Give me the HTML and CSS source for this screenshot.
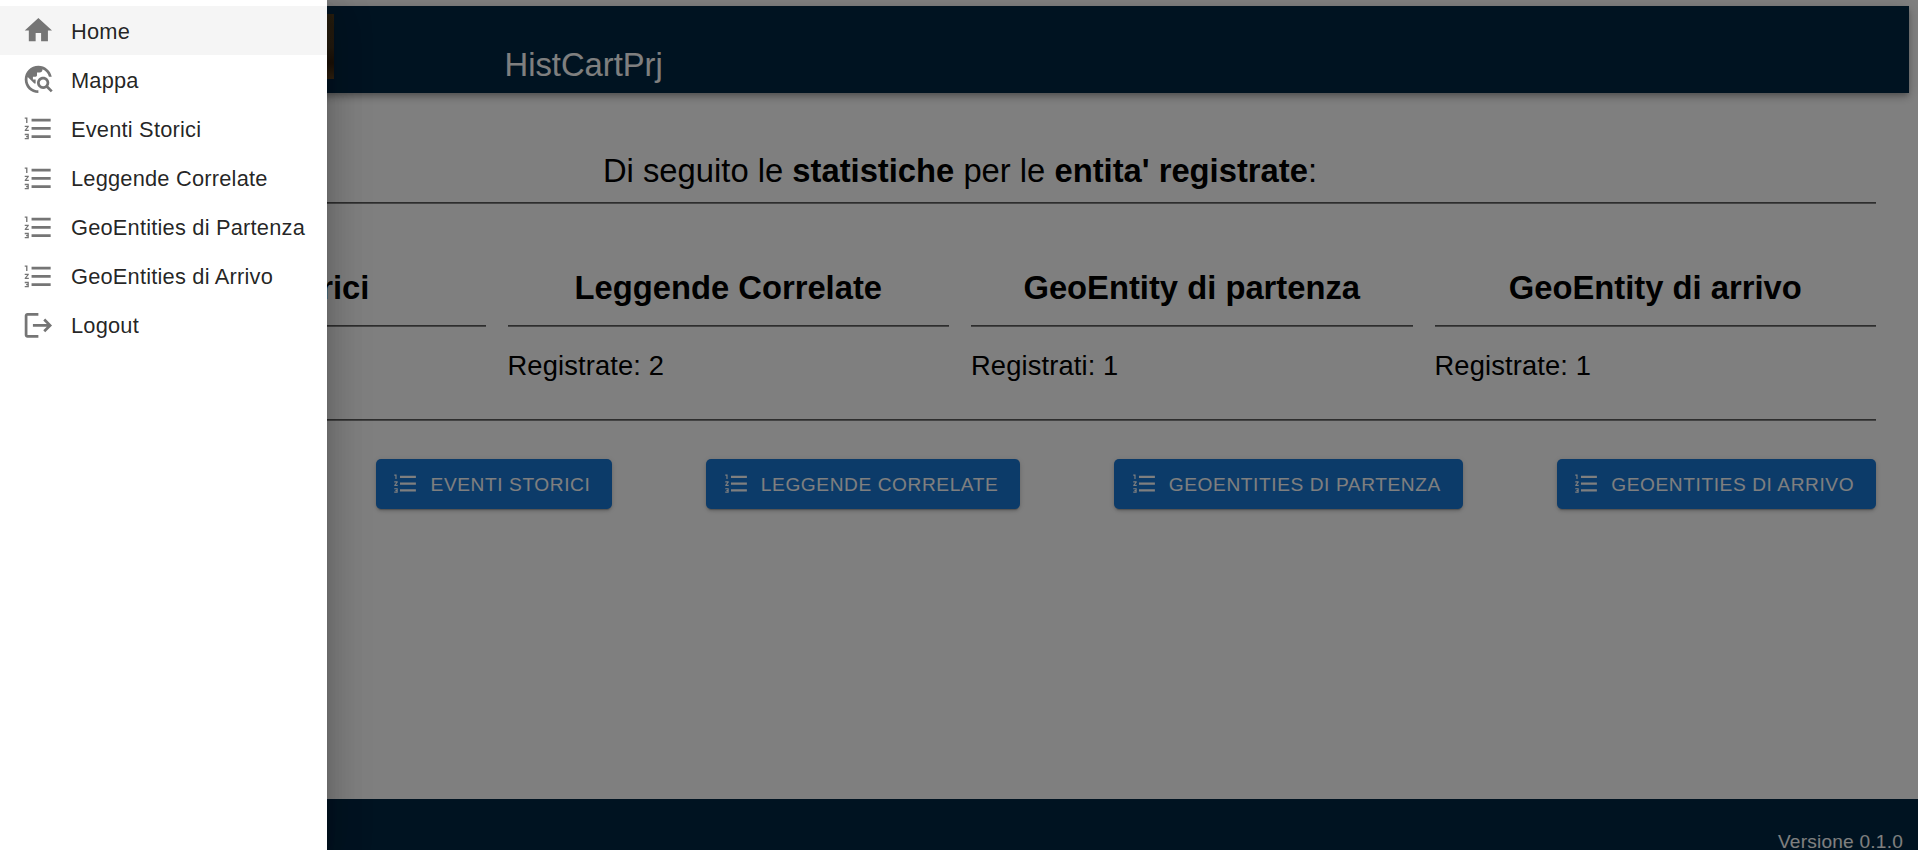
FILE: index.html
```
<!DOCTYPE html>
<html lang="it">
<head>
<meta charset="utf-8">
<title>HistCartPrj</title>
<link rel="stylesheet" href="styles.css">
</head>
<body>
<svg class="defs" aria-hidden="true">
  <symbol id="list" viewBox="0 0 24 24"><path d="M2 17h2v.5H3v1h1v.5H2v1h3v-4H2v1zm1-9h1V4H2v1h1v3zm-1 3h1.800L2 13.100v.9h3v-1H3.200L5 10.900V10H2v1zm5-6v2h14V5H7zm0 14h14v-2H7v2zm0-6h14v-2H7v2z"/></symbol>
</svg>
<div class="page">
  <header class="topbar">
    <div class="logo"></div>
    <h1 class="brand">HistCartPrj</h1>
  </header>
  <main class="content">
    <h2 class="intro">Di seguito le <b>statistiche</b> per le <b>entita' registrate</b>:</h2>
    <hr class="rule">
    <section class="stats">
      <article class="stat"><h3 class="stat-title">Eventi Storici</h3><hr class="rule"><p class="stat-value">Registrati: 2</p></article>
      <article class="stat"><h3 class="stat-title">Leggende Correlate</h3><hr class="rule"><p class="stat-value">Registrate: 2</p></article>
      <article class="stat"><h3 class="stat-title">GeoEntity di partenza</h3><hr class="rule"><p class="stat-value">Registrati: 1</p></article>
      <article class="stat"><h3 class="stat-title">GeoEntity di arrivo</h3><hr class="rule"><p class="stat-value">Registrate: 1</p></article>
    </section>
    <hr class="rule">
    <div class="actions">
      <button class="btn btn-map">Mappa</button>
      <button class="btn"><svg class="btn-icon"><use href="#list"/></svg><span class="label">Eventi Storici</span></button>
      <button class="btn"><svg class="btn-icon"><use href="#list"/></svg><span class="label">Leggende Correlate</span></button>
      <button class="btn"><svg class="btn-icon"><use href="#list"/></svg><span class="label">GeoEntities di Partenza</span></button>
      <button class="btn"><svg class="btn-icon"><use href="#list"/></svg><span class="label">GeoEntities di Arrivo</span></button>
    </div>
  </main>
  <footer class="footer">Versione 0.1.0</footer>
</div>
<div class="backdrop"></div>
<nav class="drawer">
  <a class="item item-active"><svg class="icon" viewBox="0 0 24 24"><path d="M10 20v-6h4v6h5v-8h3L12 3 2 12h3v8z"/></svg><span class="label">Home</span></a>
  <a class="item"><svg class="icon" viewBox="0 0 24 24"><path d="M19.300 16.900c.4-.7.7-1.500.7-2.400 0-2.500-2-4.500-4.500-4.500S11 12 11 14.500s2 4.500 4.500 4.500c.9 0 1.700-.3 2.400-.7l3.200 3.200 1.400-1.400-3.200-3.200zm-3.800.1c-1.400 0-2.500-1.100-2.500-2.500s1.100-2.500 2.500-2.500 2.500 1.100 2.500 2.500-1.100 2.500-2.500 2.500zM12 20v2C6.480 22 2 17.520 2 12S6.480 2 12 2c4.840 0 8.870 3.440 9.800 8h-2.070c-.64-2.460-2.400-4.470-4.730-5.410V5c0 1.100-.9 2-2 2h-2v2c0 .55-.45 1-1 1H8v2h2v3H9l-4.790-4.790C4.080 10.790 4 11.380 4 12c0 4.410 3.590 8 8 8z"/></svg><span class="label">Mappa</span></a>
  <a class="item"><svg class="icon"><use href="#list"/></svg><span class="label">Eventi Storici</span></a>
  <a class="item"><svg class="icon"><use href="#list"/></svg><span class="label">Leggende Correlate</span></a>
  <a class="item"><svg class="icon"><use href="#list"/></svg><span class="label">GeoEntities di Partenza</span></a>
  <a class="item"><svg class="icon"><use href="#list"/></svg><span class="label">GeoEntities di Arrivo</span></a>
  <a class="item"><svg class="icon" viewBox="0 0 24 24"><path d="m17 7-1.410 1.410L18.170 11H8v2h10.170l-2.580 2.580L17 17l5-5zM4 5h8V3H4c-1.100 0-2 .9-2 2v14c0 1.100.9 2 2 2h8v-2H4V5z"/></svg><span class="label">Logout</span></a>
</nav>
</body>
</html>
```
FILE: styles.css
```
* { box-sizing: border-box; }

html { font-size: 21.84px; }

body {
  margin: 0;
  height: 850px;
  overflow: hidden;
  background: #fff;
  color: #000;
  font-family: "Liberation Sans", Arial, sans-serif;
}

h1, h2, h3, p { margin: 0; font-weight: 400; }

.defs { display: block; width: 0; height: 0; }

.page {
  display: flex;
  flex-direction: column;
  height: 850px;
  padding-top: 6px;
}

.topbar {
  display: flex;
  flex: none;
  height: 87px;
  margin: 0 9px;
  padding-top: 8px;
  background: #002743;
  box-shadow: 0 3px 5px -1px rgba(0, 0, 0, .2), 0 5px 7px rgba(0, 0, 0, .14), 0 1px 14px rgba(0, 0, 0, .12);
}

.logo {
  width: 65px;
  height: 65px;
  margin-left: 260px;
  background: linear-gradient(#4c3a1d, #49371e 50%, #35230f 75%, #604321);
}

.brand {
  padding: 29px 0 0 170.5px;
  color: #fff;
  font-size: 1.5rem;
  line-height: 1.334;
}

.content { flex: 1; padding: 56px 42px 0 44px; }

.intro {
  font-size: 1.5rem;
  line-height: 44px;
  text-align: center;
}

.rule {
  height: 2px;
  margin: 0;
  border: 0;
  border-top: 1px solid #5b5b5b;
  border-bottom: 1px solid #888;
}

.intro + .rule { margin-top: 9px; }

.stats {
  display: grid;
  grid-template-columns: repeat(4, 1fr);
  gap: 22px;
  height: 215px;
  padding-top: 62px;
}

.stat-title {
  padding-bottom: 15px;
  font-size: 1.5rem;
  font-weight: 700;
  line-height: 44px;
  text-align: center;
}

.stat-value {
  padding-top: 17px;
  font-size: 1.25rem;
  line-height: 44px;
  letter-spacing: .005em;
}

.actions {
  display: flex;
  justify-content: space-between;
  padding-top: 38px;
}

.btn {
  display: flex;
  align-items: center;
  height: 50px;
  padding: 0 1rem;
  border: 0;
  border-radius: 5px;
  background: #1976d2;
  box-shadow: 0 3px 1px -2px rgba(0, 0, 0, .2), 0 2px 3px rgba(0, 0, 0, .14), 0 1px 7px rgba(0, 0, 0, .12);
  color: #fff;
  font: inherit;
  font-size: .875rem;
  letter-spacing: .031em;
  text-transform: uppercase;
  white-space: nowrap;
}

.btn-map { width: 238px; }

.label { padding-top: 2px; }

.btn-icon {
  width: 1.25rem;
  height: 1.25rem;
  margin: 0 .5rem 0 -.25rem;
  fill: currentColor;
}

.footer {
  flex: none;
  height: 51px;
  padding: 29px 15px 0;
  background: #002743;
  color: #fff;
  font-size: .875rem;
  line-height: 1.43;
  letter-spacing: .01071em;
  text-align: right;
}

.backdrop {
  position: absolute;
  inset: 0;
  background: rgba(0, 0, 0, .5);
}

.drawer {
  position: absolute;
  inset: 0 auto 0 0;
  width: 327px;
  padding-top: 6px;
  background: #fff;
  box-shadow: 0 11px 14px -7px rgba(0, 0, 0, .2), 0 22px 33px 3px rgba(0, 0, 0, .14), 0 8px 41px 7px rgba(0, 0, 0, .12);
}

.item {
  display: flex;
  align-items: center;
  height: 2.25rem;
  padding: 0 1rem;
  color: rgba(0, 0, 0, .87);
  font-size: 1rem;
  letter-spacing: .00938em;
  white-space: nowrap;
}

.item-active { background: #f5f5f5; }

.icon {
  flex: none;
  width: 1.5rem;
  height: 1.5rem;
  margin-right: .75rem;
  fill: #757575;
}
```
